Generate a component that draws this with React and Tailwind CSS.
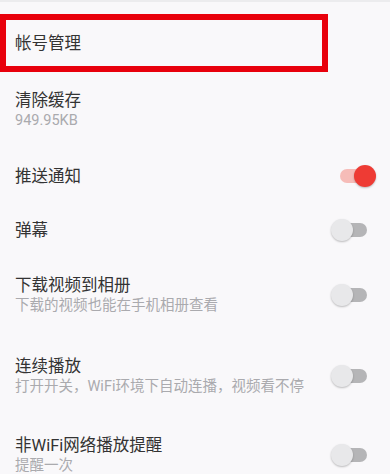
const font = { fontFamily: 'Roboto, "Noto Sans CJK SC", "Noto Sans", sans-serif' };

const settings = [
  { id: "cache", title: "清除缓存", sub: "949.95KB", h: "h-[76px]" },
  { id: "push", title: "推送通知", on: true, h: "h-[56px]" },
  { id: "danmu", title: "弹幕", on: false, h: "h-[52px]" },
  { id: "save", title: "下载视频到相册", sub: "下载的视频也能在手机相册查看", on: false, h: "h-[78px]" },
  { id: "autoplay", title: "连续播放", sub: "打开开关，WiFi环境下自动连播，视频看不停", on: false, h: "h-[84px]" },
  { id: "mobile", title: "非WiFi网络播放提醒", sub: "提醒一次", on: false, h: "h-[74px]" },
];

const Toggle = ({ on }) => (
  <div className="relative w-[45px] h-[24px] shrink-0">
    {on ? (
      <>
        <div className="absolute left-[9px] top-[5px] w-[26px] h-[14px] rounded-full bg-[#f6bcb8]" />
        <div className="absolute left-[23px] top-[1px] w-[22px] h-[22px] rounded-full bg-[#ee3b34] shadow-[0_1px_2px_rgba(0,0,0,0.25)]" />
      </>
    ) : (
      <>
        <div className="absolute left-[10px] top-[5px] w-[26px] h-[14px] rounded-full bg-[#b5b5b7]" />
        <div className="absolute left-0 top-[1px] w-[22px] h-[22px] rounded-full bg-[#e8e8ea] shadow-[0_1px_2px_rgba(0,0,0,0.25)]" />
      </>
    )}
  </div>
);

export default function App() {
  return (
    <div className="w-[390px] h-[474px] overflow-hidden bg-[#f9f8fa] border-t-2 border-[#ececee]" style={font}>
      <div className="mt-[12px] w-[328px] h-[58px] border-[6px] border-[#e8000c] flex items-center pl-[9px]">
        <span className="text-[16.5px] leading-[21px] text-[#333]">帐号管理</span>
      </div>

      {settings.map((item) => (
        <div key={item.id} className={`flex items-center justify-between pl-[15px] pr-[14px] ${item.h}`}>
          <div className="flex flex-col">
            <span className="text-[16.5px] leading-[21px] text-[#333]">{item.title}</span>
            {item.sub && (
              <span className="text-[14.5px] leading-[20px] text-[#aaaaae]">{item.sub}</span>
            )}
          </div>
          {item.on !== undefined && <Toggle on={item.on} />}
        </div>
      ))}
    </div>
  );
}
